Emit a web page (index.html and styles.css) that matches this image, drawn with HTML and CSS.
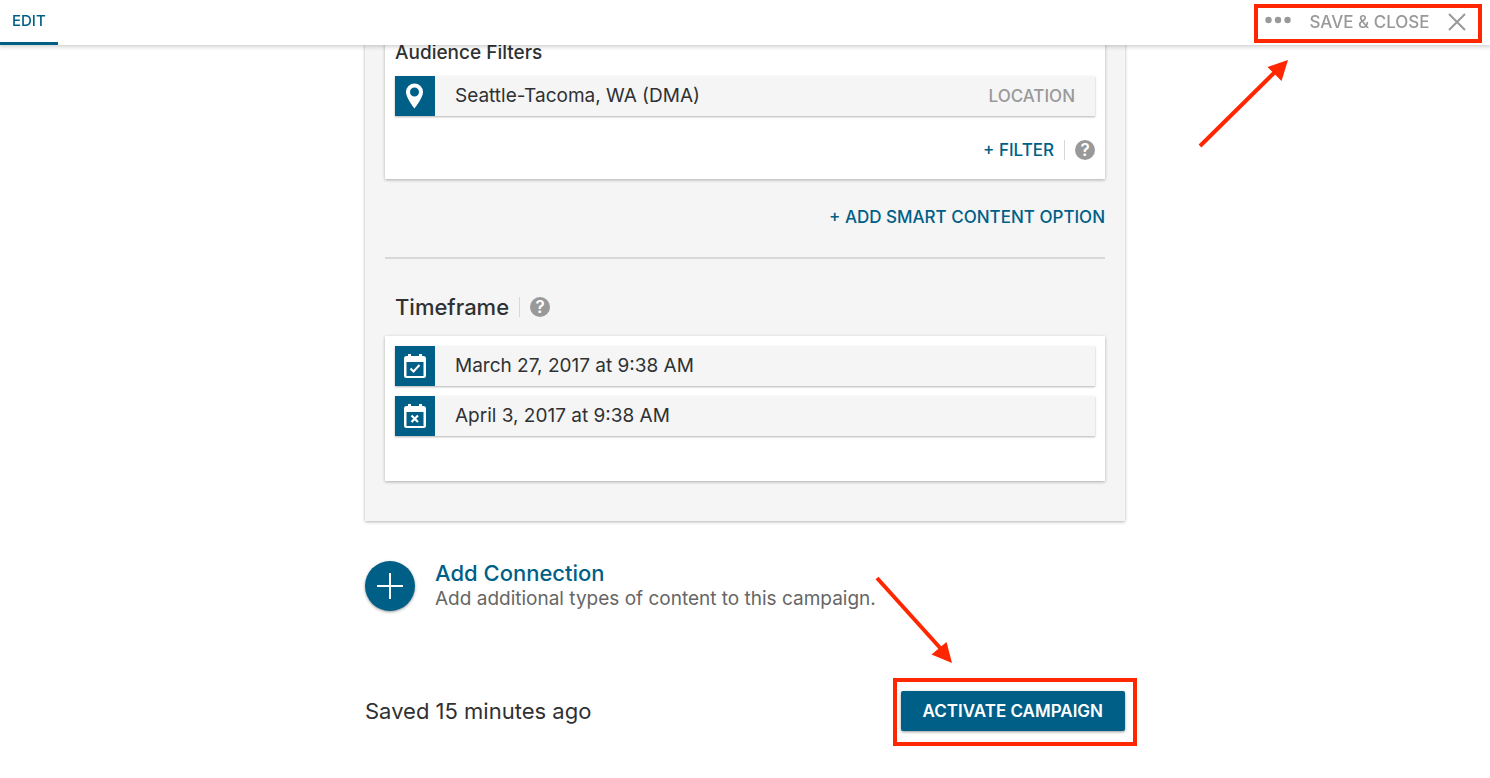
FILE: index.html
```html
<!DOCTYPE html>
<html lang="en">
<head>
<meta charset="utf-8">
<title>Edit campaign</title>
<link rel="stylesheet" href="styles.css">
</head>
<body>
<header class="topbar">
  <nav class="tabs"><a class="tab" href="#edit">EDIT</a></nav>
  <div class="topbar-actions">
    <button class="icon-button more" type="button" aria-label="More options">
      <svg width="26" height="8" viewBox="0 0 26 8" fill="currentColor"><circle cx="3.5" cy="4" r="3.2"/><circle cx="13" cy="4" r="3.2"/><circle cx="22.500" cy="4" r="3.2"/></svg>
    </button>
    <button class="save" type="button">SAVE &amp; CLOSE</button>
    <button class="icon-button" type="button" aria-label="Close">
      <svg width="18" height="18" viewBox="0 0 18 18" fill="none" stroke="currentColor" stroke-width="2"><path d="M1 1 17 17M17 1 1 17"/></svg>
    </button>
    <svg class="arrow arrow-save" width="94" height="92" viewBox="0 0 94 92" aria-hidden="true"><path d="M4 90 81 14" fill="none" stroke="#ff2600" stroke-width="4"/><path d="M92 4 71.500 11 85.500 25Z" fill="#ff2600"/></svg>
  </div>
</header>

<main class="page">
  <section class="panel">
    <div class="card audience">
      <h3 class="card-title">Audience Filters</h3>
      <div class="row">
        <span class="row-icon"><svg width="40" height="40" viewBox="0 0 40 40"><path fill="#fff" fill-rule="evenodd" d="M19.500 7.500a8.500 8.500 0 0 0-8.500 8.500c0 6 8.500 16.500 8.500 16.500S28 22 28 16a8.500 8.500 0 0 0-8.500-8.500Zm0 4a4.500 4.500 0 1 1 0 9 4.500 4.500 0 0 1 0-9Z"/></svg></span>
        <span class="row-text">Seattle-Tacoma, WA (DMA)</span>
        <span class="row-tag">LOCATION</span>
      </div>
      <div class="card-actions">
        <button class="text-button" type="button">+ FILTER</button>
        <span class="divider"></span>
        <button class="help" type="button" aria-label="Help with filters">?</button>
      </div>
    </div>
    <div class="panel-actions"><button class="text-button" type="button">+ ADD SMART CONTENT OPTION</button></div>
    <hr class="rule">
    <div class="section-head">
      <h2 class="section-title">Timeframe</h2>
      <span class="divider"></span>
      <button class="help" type="button" aria-label="Help with timeframe">?</button>
    </div>
    <div class="card timeframe">
      <div class="row">
        <span class="row-icon"><svg width="40" height="40" viewBox="0 0 40 40"><path fill="#fff" fill-rule="evenodd" d="M13 8h3v2h8V8h3v2h1.500a2.500 2.500 0 0 1 2.500 2.500v17a2.500 2.500 0 0 1-2.500 2.500h-17A2.500 2.500 0 0 1 9 29.500v-17A2.500 2.500 0 0 1 11.500 10H13ZM11.500 16v14h17V16Z"/><path fill="none" stroke="#fff" stroke-width="2" d="m15.500 22.500 3 3 6-6.500"/></svg></span>
        <span class="row-text">March 27, 2017 at 9:38 AM</span>
      </div>
      <div class="row">
        <span class="row-icon"><svg width="40" height="40" viewBox="0 0 40 40"><path fill="#fff" fill-rule="evenodd" d="M13 8h3v2h8V8h3v2h1.500a2.500 2.500 0 0 1 2.500 2.500v17a2.500 2.500 0 0 1-2.500 2.500h-17A2.500 2.500 0 0 1 9 29.500v-17A2.500 2.500 0 0 1 11.500 10H13ZM11.500 16v14h17V16Z"/><path fill="none" stroke="#fff" stroke-width="2.200" d="m16.500 19.500 6.500 6.500m0-6.500-6.500 6.500"/></svg></span>
        <span class="row-text">April 3, 2017 at 9:38 AM</span>
      </div>
    </div>
  </section>

  <section class="connection">
    <button class="add" type="button" aria-label="Add connection"><svg width="26" height="26" viewBox="0 0 26 26" stroke="#fff" stroke-width="2"><path d="M13 0v26M0 13h26"/></svg></button>
    <div class="connection-text">
      <a class="connection-title" href="#add">Add Connection</a>
      <p class="connection-note">Add additional types of content to this campaign.</p>
    </div>
  </section>

  <footer class="footer">
    <p class="saved">Saved 15 minutes ago</p>
    <div class="activate-wrap">
      <button class="activate" type="button">ACTIVATE CAMPAIGN</button>
      <svg class="arrow arrow-activate" width="80" height="90" viewBox="0 0 80 90" aria-hidden="true"><path d="M2 3 67 75" fill="none" stroke="#ff2600" stroke-width="4"/><path d="M77 88 56.500 79.500 71.500 67Z" fill="#ff2600"/></svg>
    </div>
  </footer>
</main>
</body>
</html>
```
FILE: styles.css
```css
* { box-sizing: border-box; }
body {
  margin: 0;
  background: #fff;
  color: #2f3133;
  font-family: Inter, "Liberation Sans", sans-serif;
  font-size: 19px;
  line-height: 24px;
}
h2, h3, p { margin: 0; }
svg { display: block; }
button {
  padding: 0;
  border: 0;
  background: none;
  font: inherit;
  color: inherit;
  cursor: pointer;
}
a { text-decoration: none; }

.topbar {
  position: fixed;
  inset: 0 0 auto;
  z-index: 2;
  display: flex;
  justify-content: space-between;
  height: 45px;
  background: #fff;
  box-shadow: 0 1px 4px 1px rgba(0, 0, 0, 0.18);
}
.tab {
  display: block;
  height: 45px;
  padding: 0 12px;
  border-bottom: 3px solid #005f86;
  color: #005f86;
  font-size: 15px;
  font-weight: 500;
  line-height: 42px;
}
.topbar-actions {
  position: relative;
  display: flex;
  align-items: center;
  justify-content: space-between;
  width: 228px;
  height: 39px;
  margin: 4px 8px 0 0;
  padding: 0 12px 3px 7px;
  border: 4px solid #ff2600;
  color: #999;
}
.more { padding-bottom: 4px; }
.save { font-size: 17px; font-weight: 500; }
.arrow { position: absolute; pointer-events: none; }
.arrow-save { top: 48px; right: 188px; }

.page {
  max-width: 760px;
  margin: 0 auto;
}
.panel {
  padding: 0 20px 40px;
  background: #f5f5f5;
  box-shadow: 0 1px 3px rgba(0, 0, 0, 0.3);
}
.card {
  padding: 10px;
  background: #fff;
  box-shadow: 0 1px 3px rgba(0, 0, 0, 0.3);
}
.audience { padding: 41px 10px 19px; }
.card-title {
  margin-bottom: 11px;
  font-size: 19px;
  font-weight: 500;
}
.row {
  display: flex;
  align-items: center;
  height: 40px;
  padding-right: 20px;
  background: #f5f5f5;
  box-shadow: 0 1px 2px rgba(0, 0, 0, 0.3);
}
.row-icon { background: #005f86; }
.row-text { flex: 1; padding-left: 20px; }
.row-tag { color: #999; font-size: 17px; font-weight: 500; }
.card-actions, .panel-actions {
  display: flex;
  align-items: center;
  justify-content: flex-end;
}
.card-actions { height: 20px; margin-top: 24px; }
.panel-actions { margin-top: 26px; }
.text-button { color: #005f86; font-size: 17px; font-weight: 500; }
.divider {
  width: 1px;
  height: 20px;
  margin: 0 10px;
  background: #d8d8d8;
}
.help {
  width: 20px;
  height: 20px;
  border-radius: 50%;
  background: #999;
  color: #fff;
  font-size: 17px;
  font-weight: 600;
  line-height: 20px;
}
.rule {
  height: 2px;
  margin: 28px 0;
  border: 0;
  background: #d8d8d8;
}
.section-head {
  display: flex;
  align-items: center;
  height: 40px;
  margin-bottom: 9px;
  padding-left: 10px;
}
.section-title { font-size: 22px; font-weight: 500; }
.timeframe { padding-bottom: 45px; }
.timeframe .row + .row { margin-top: 10px; }

.connection {
  display: flex;
  gap: 20px;
  margin-top: 40px;
}
.add {
  display: grid;
  place-items: center;
  width: 50px;
  height: 50px;
  border-radius: 50%;
  background: #005f86;
  box-shadow: 0 1px 3px rgba(0, 0, 0, 0.4);
}
.connection-title { color: #005f86; font-size: 22px; font-weight: 500; }
.connection-note { color: #666; }

.footer {
  display: flex;
  align-items: center;
  justify-content: space-between;
  margin: 80px 0 47px;
}
.saved { font-size: 22px; }
.activate-wrap { position: relative; }
.activate-wrap::after {
  content: "";
  position: absolute;
  inset: -13px -12px -15px -8px;
  border: 4px solid #ff2600;
  pointer-events: none;
}
.activate {
  height: 40px;
  padding: 0 22px;
  border-radius: 2px;
  background: #005f86;
  box-shadow: 0 1px 3px rgba(0, 0, 0, 0.4);
  color: #fff;
  font-size: 17px;
  font-weight: 600;
}
.arrow-activate { right: 170px; bottom: 66px; }
```
